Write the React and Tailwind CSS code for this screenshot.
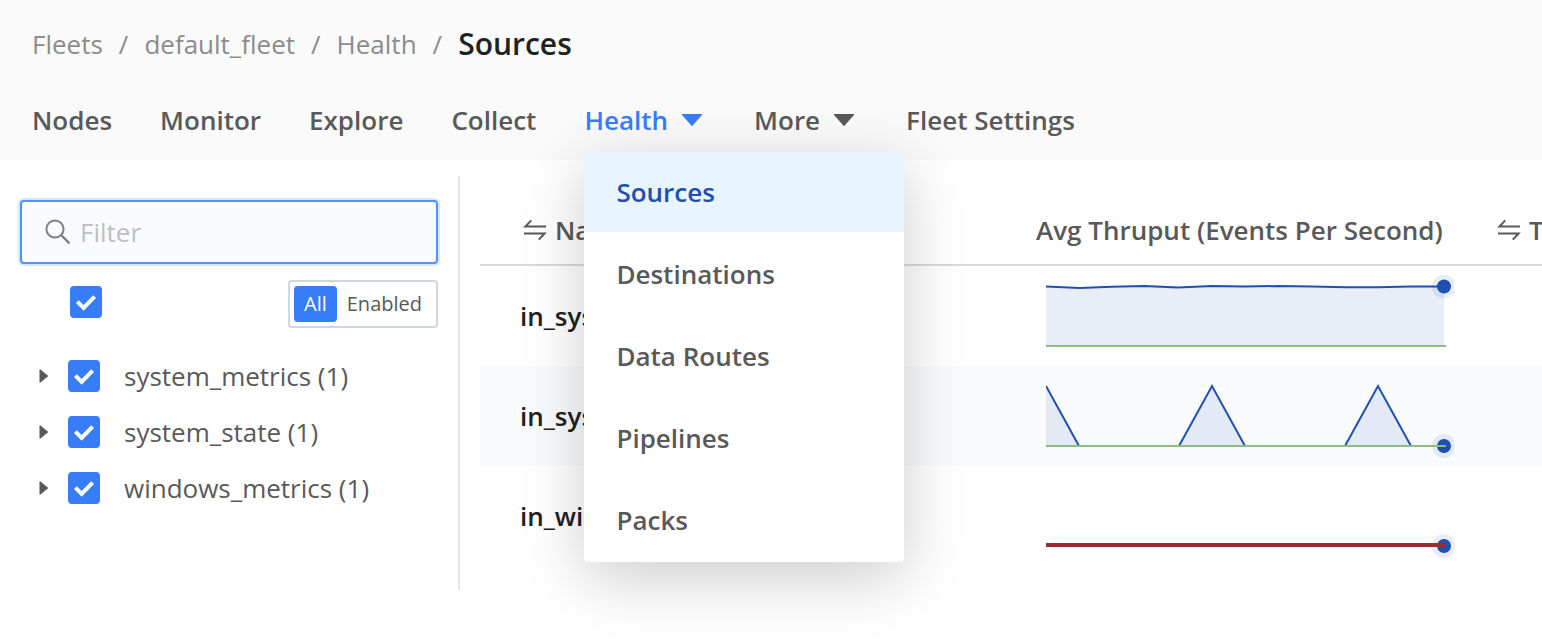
import React, { useState } from 'react';
import clsx from 'clsx';

const crumbs = ['Fleets', 'default_fleet', 'Health'];

const healthMenu = ['Sources', 'Destinations', 'Data Routes', 'Pipelines', 'Packs'];

const groups = [
  { id: 'system_metrics', count: 1 },
  { id: 'system_state', count: 1 },
  { id: 'windows_metrics', count: 1 },
];

// Points live in a 408x100 box, the baseline sits at y=80
const sources = [
  {
    name: 'in_system_metrics',
    points: '0,20.5 34,22 66,20.7 98,20 132,21.4 166,20 198,20.6 232,20 266,20.6 300,21.3 332,21.3 364,20.6 398,20.5',
    dotY: 20.5,
  },
  {
    name: 'in_system_state',
    points: '0,20 33,80 133,80 166,20 199,80 299,80 332,20 365,80 398,80',
    dotY: 80,
  },
  {
    name: 'in_windows_metrics',
    points: '0,80 398,80',
    dotY: 80,
    down: true,
  },
];

function CaretDown() {
  return (
    <svg viewBox="0 0 24 24" className="mr-0.5 ml-3 h-6 w-6" fill="currentColor" aria-hidden="true">
      <path d="M2.6 6h18.8c.6 0 .9.6.5 1l-9.2 10.6a1 1 0 0 1-1.4 0L2.1 7c-.4-.4-.1-1 .5-1z" />
    </svg>
  );
}

function SwapIcon() {
  return (
    <svg viewBox="0 0 24 24" className="h-6 w-6 shrink-0" fill="none" stroke="currentColor" strokeWidth="2" aria-hidden="true">
      <path d="M23 8.6H2.4L8.2 2.4" />
      <path d="M1 15.4h20.6l-5.8 6.2" />
    </svg>
  );
}

function SearchIcon() {
  return (
    <svg viewBox="0 0 26 26" className="h-[26px] w-[26px] shrink-0 text-[#808080]" fill="none" stroke="currentColor" aria-hidden="true">
      <circle cx="10" cy="10" r="8.6" strokeWidth="2" />
      <path d="M16.2 16.2l8.2 8.2" strokeWidth="2.4" />
    </svg>
  );
}

function Checkbox({ id, label, checked, onChange }) {
  return (
    <span className="relative block h-8 w-8 shrink-0">
      <input
        id={id}
        type="checkbox"
        aria-label={label}
        checked={checked}
        onChange={onChange}
        className="block h-8 w-8 appearance-none rounded border-2 border-[#cfd8e1] bg-white checked:border-[#377dfa] checked:bg-[#377dfa]"
      />
      {checked && (
        <svg viewBox="0 0 32 32" className="pointer-events-none absolute inset-0 h-8 w-8" fill="none" stroke="#fff" strokeWidth="4" aria-hidden="true">
          <path d="M7.4 15.6l6.2 6.2L24.6 10.6" />
        </svg>
      )}
    </span>
  );
}

function Sparkline({ points, dotY, down }) {
  return (
    <svg viewBox="0 0 408 100" className="block h-[100px] w-[408px]" aria-hidden="true">
      <polygon points={`0,80 ${points} 398,80`} fill="#1f4fb0" fillOpacity="0.1" />
      <polyline points={points} fill="none" stroke="#1f4fb0" strokeWidth="2" />
      <circle cx="398" cy={dotY} r="12" fill="#1f4fb0" fillOpacity="0.1" />
      <circle cx="398" cy={dotY} r="7" fill="#1f4fb0" />
      {down ? (
        <path d="M0 79h400" stroke="#9f2a30" strokeWidth="4" />
      ) : (
        <path d="M0 80h400" stroke="#8dbd84" strokeWidth="2" />
      )}
    </svg>
  );
}

export default function App() {
  const [menuOpen, setMenuOpen] = useState(true);
  const [active, setActive] = useState('Sources');
  const [mode, setMode] = useState('All');
  const [filter, setFilter] = useState('');
  const [selected, setSelected] = useState(groups.map((g) => g.id));

  const allSelected = selected.length === groups.length;

  const toggle = (id) => {
    setSelected((prev) => (prev.includes(id) ? prev.filter((s) => s !== id) : [...prev, id]));
  };

  return (
    <div className="min-h-screen overflow-x-hidden bg-white font-['Open_Sans',sans-serif] text-[26px] leading-9 text-[#595959]">

      {/* Header */}
      <header className="bg-[#fafafa] px-8 pt-[26px] pb-[22px]">
        <nav aria-label="Breadcrumb" className="flex items-center gap-4 text-[#8c8c8c]">
          {crumbs.map((c) => (
            <React.Fragment key={c}>
              <a href="#">{c}</a>
              <span>/</span>
            </React.Fragment>
          ))}
          <h1 className="text-[30px] font-semibold text-[#212121]">{active}</h1>
        </nav>

        <nav aria-label="Fleet" className="mt-10 flex items-center gap-12 font-semibold whitespace-nowrap">
          <a href="#">Nodes</a>
          <a href="#">Monitor</a>
          <a href="#">Explore</a>
          <a href="#">Collect</a>
          <div className="relative">
            <button
              onClick={() => setMenuOpen(!menuOpen)}
              aria-expanded={menuOpen}
              className="flex items-center text-[#377dfa]"
            >
              Health
              <CaretDown />
            </button>
            {menuOpen && (
              <ul className="absolute top-[50px] left-0 z-10 flex w-80 flex-col gap-0.5 overflow-hidden rounded bg-white pb-0.5 shadow-[0_16px_64px_rgba(0,0,0,0.2)]">
                {healthMenu.map((item) => (
                  <li key={item}>
                    <a
                      href="#"
                      onClick={() => setActive(item)}
                      className={clsx('flex h-20 items-center px-8', item === active && 'bg-[#e8f5fe] text-[#1f4fb0]')}
                    >
                      {item}
                    </a>
                  </li>
                ))}
              </ul>
            )}
          </div>
          <button className="flex items-center">
            More
            <CaretDown />
          </button>
          <a href="#">Fleet Settings</a>
        </nav>
      </header>

      <main className="flex gap-5 pt-4">

        {/* Source filter */}
        <aside className="w-[460px] shrink-0 border-r-2 border-[#e8e8e8] px-5 pt-6">
          <label className="flex h-16 items-center gap-[9px] rounded border-2 border-[#4b96f8] bg-[#fafbfe] px-[23px] shadow-[0_0_0_2px_#d7e5fd]">
            <SearchIcon />
            <input
              type="text"
              aria-label="Filter"
              placeholder="Filter"
              value={filter}
              onChange={(e) => setFilter(e.target.value)}
              className="w-full min-w-0 bg-transparent outline-none placeholder:text-[#bfbfbf]"
            />
          </label>

          <div className="mt-4 flex items-start justify-between">
            <div className="mt-1.5 ml-[50px]">
              <Checkbox
                id="all"
                label="Select all"
                checked={allSelected}
                onChange={() => setSelected(allSelected ? [] : groups.map((g) => g.id))}
              />
            </div>
            <div className="flex h-12 rounded border-2 border-[#cfd8e1] p-1 text-xl">
              {['All', 'Enabled'].map((m) => (
                <button
                  key={m}
                  onClick={() => setMode(m)}
                  className={clsx('flex items-center rounded px-2.5', m === mode && 'bg-[#377dfa] text-white')}
                >
                  {m}
                </button>
              ))}
            </div>
          </div>

          <ul className="mt-5">
            {groups.map((g) => (
              <li key={g.id} className="flex h-14 items-center">
                <button aria-label={`Expand ${g.id}`} className="flex h-8 w-12 items-center pl-[19px]">
                  <svg viewBox="0 0 10 14" className="h-3.5 w-2.5" fill="currentColor" aria-hidden="true">
                    <path d="M.5.6c0-.5.4-.6.7-.3l7.6 6.1c.4.3.4.8 0 1.1l-7.6 6.2c-.3.3-.7.1-.7-.3z" />
                  </svg>
                </button>
                <Checkbox id={g.id} checked={selected.includes(g.id)} onChange={() => toggle(g.id)} />
                <label htmlFor={g.id} className="pl-6">{g.id} ({g.count})</label>
              </li>
            ))}
          </ul>
        </aside>

        {/* Sources table */}
        <section className="min-w-0 flex-1 overflow-x-auto pt-5 pb-6 [scrollbar-width:none]">
          <table className="w-full min-w-[1240px] table-fixed border-separate border-spacing-0 text-left whitespace-nowrap">
            <thead>
              <tr className="h-[70px]">
                <th className="border-b-2 border-[#d9d9d9] py-0 pl-[43px] font-semibold">
                  <span className="flex items-center gap-2">
                    <SwapIcon />
                    Name
                  </span>
                </th>
                <th className="w-[462px] border-b-2 border-[#d9d9d9] py-0 pl-5 font-semibold">Avg Thruput (Events Per Second)</th>
                <th className="w-[242px] border-b-2 border-[#d9d9d9] py-0 pl-[19px] font-semibold">
                  <span className="flex items-center gap-2">
                    <SwapIcon />
                    Total In
                  </span>
                </th>
              </tr>
            </thead>
            <tbody className="font-semibold text-[#212121]">
              {sources.map((s) => (
                <tr key={s.name} className="even:bg-[#fafbfd]">
                  <td className="p-0 pl-10">{s.name}</td>
                  <td className="p-0 pl-[30px]">
                    <Sparkline points={s.points} dotY={s.dotY} down={s.down} />
                  </td>
                  <td className="p-0" />
                </tr>
              ))}
            </tbody>
          </table>
        </section>

      </main>
    </div>
  );
}
